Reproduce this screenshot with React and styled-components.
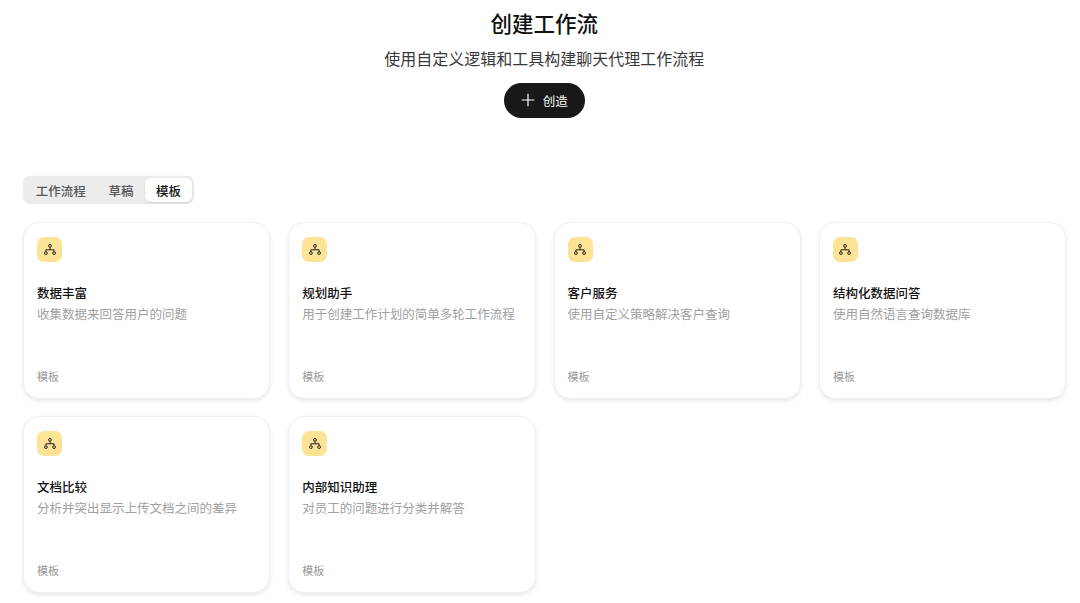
import React from 'react';
import styled, { createGlobalStyle } from 'styled-components';

const GlobalStyle = createGlobalStyle`
    html, body {
        margin: 0;
        padding: 0;
        background-color: #fff;
        font-family: "Noto Sans CJK SC", "Noto Sans", sans-serif;
    }
`;

const Page = styled.div`
    width: 1080px;
    height: 603px;
    overflow: hidden;
    box-sizing: border-box;
    padding: 0 14.5px 0 23px;
`;

const Hero = styled.header`
    display: flex;
    flex-direction: column;
    align-items: center;
    padding-top: 7px;
`;

const Title = styled.h1`
    margin: 0;
    font-size: 21.5px;
    line-height: 32px;
    font-weight: 500;
    color: #111;
`;

const Subtitle = styled.p`
    margin: 7px 0 0;
    font-size: 16px;
    line-height: 24px;
    font-weight: 400;
    color: #3a3a3a;
`;

const CreateButton = styled.button`
    display: flex;
    align-items: center;
    justify-content: center;
    gap: 8px;
    width: 81px;
    height: 35.6px;
    margin-top: 12.7px;
    padding: 0;
    border: 0;
    border-radius: 18px;
    background-color: #181818;
    color: #fff;
    font-family: inherit;
    font-size: 12.5px;
`;

const Tabs = styled.nav`
    display: inline-flex;
    align-items: center;
    gap: 1px;
    box-sizing: border-box;
    height: 28.5px;
    margin-top: 57.7px;
    padding: 2px;
    border-radius: 8px;
    background-color: #ececec;
    box-shadow: 0 0 1px rgba(0, 0, 0, 0.12);
`;

const Tab = styled.div`
    display: flex;
    align-items: center;
    height: 24.5px;
    padding: 0 10.8px;
    border-radius: 6px;
    font-size: 12.5px;
    font-weight: 500;
    color: ${({ $active }) => ($active ? '#111' : '#555')};
    background-color: ${({ $active }) => ($active ? '#fff' : 'transparent')};
    box-shadow: ${({ $active }) => ($active ? '0 1px 2px rgba(0, 0, 0, 0.12)' : 'none')};
`;

const Grid = styled.section`
    display: grid;
    grid-template-columns: repeat(4, 247.3px);
    grid-auto-rows: 176.6px;
    gap: 17.6px 18px;
    margin-top: 17.8px;
`;

const Card = styled.article`
    display: flex;
    flex-direction: column;
    box-sizing: border-box;
    padding: 13.7px 13px 14.2px;
    border: 1px solid #f0f0f0;
    border-radius: 16px;
    background-color: #fff;
    box-shadow: 0 2px 4px rgba(0, 0, 0, 0.09);
`;

const IconBadge = styled.div`
    display: flex;
    align-items: center;
    justify-content: center;
    width: 25px;
    height: 25px;
    border-radius: 7px;
    background-color: #fde396;
`;

const CardTitle = styled.h3`
    margin: 22px 0 0;
    font-size: 12.5px;
    line-height: 18px;
    font-weight: 500;
    color: #111;
`;

const CardDesc = styled.p`
    margin: 3px 0 0;
    font-size: 12.5px;
    line-height: 18px;
    color: #a0a0a0;
`;

const CardTag = styled.span`
    margin-top: auto;
    font-size: 11px;
    line-height: 16px;
    color: #999;
`;

const PlusIcon = () => (
    <svg width="14" height="14" viewBox="0 0 14 14" fill="none" stroke="#fff" strokeWidth="1.2">
        <path d="M7 .7v12.6M.7 7h12.6" />
    </svg>
);

const FlowIcon = () => (
    <svg width="12" height="11" viewBox="0 0 12 11" fill="none" stroke="#222" strokeWidth="1">
        <circle cx="6" cy="1.9" r="1.4" />
        <circle cx="1.9" cy="9.1" r="1.4" />
        <circle cx="10.1" cy="9.1" r="1.4" />
        <path d="M6 3.3v2.5M1.9 7.7V5.8h8.2v1.9" />
    </svg>
);

const templates = [
    { title: '数据丰富', desc: '收集数据来回答用户的问题' },
    { title: '规划助手', desc: '用于创建工作计划的简单多轮工作流程' },
    { title: '客户服务', desc: '使用自定义策略解决客户查询' },
    { title: '结构化数据问答', desc: '使用自然语言查询数据库' },
    { title: '文档比较', desc: '分析并突出显示上传文档之间的差异' },
    { title: '内部知识助理', desc: '对员工的问题进行分类并解答' },
];

const App = () => (
    <Page>
        <GlobalStyle />
        <Hero>
            <Title>创建工作流</Title>
            <Subtitle>使用自定义逻辑和工具构建聊天代理工作流程</Subtitle>
            <CreateButton>
                <PlusIcon />
                创造
            </CreateButton>
        </Hero>
        <Tabs>
            <Tab>工作流程</Tab>
            <Tab>草稿</Tab>
            <Tab $active>模板</Tab>
        </Tabs>
        <Grid>
            {templates.map(({ title, desc }) => (
                <Card key={title}>
                    <IconBadge>
                        <FlowIcon />
                    </IconBadge>
                    <CardTitle>{title}</CardTitle>
                    <CardDesc>{desc}</CardDesc>
                    <CardTag>模板</CardTag>
                </Card>
            ))}
        </Grid>
    </Page>
);

export default App;
